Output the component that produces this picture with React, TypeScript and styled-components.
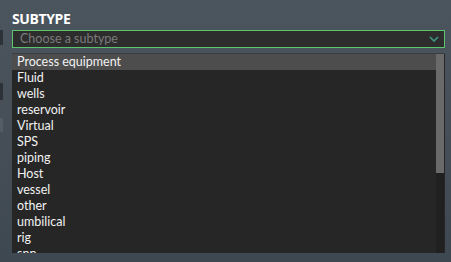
import { FC } from "react";
import styled, { createGlobalStyle } from "styled-components";

const OPTIONS = [
  "Process equipment",
  "Fluid",
  "wells",
  "reservoir",
  "Virtual",
  "SPS",
  "piping",
  "Host",
  "vessel",
  "other",
  "umbilical",
  "rig",
  "spp",
];

const GlobalStyle = createGlobalStyle`
  html, body {
    margin: 0;
    padding: 0;
    background: #434d56;
  }
  body {
    font-family: Lato, "Open Sans", sans-serif;
  }
`;

const Chevron: FC = () => (
  <svg width="10" height="6" viewBox="0 0 10 6" fill="none">
    <path d="M1 1 L5 5 L9 1" stroke="#3f9a84" strokeWidth="1.6" />
  </svg>
);

const App: FC = () => (
  <Page>
    <GlobalStyle />
    <Rail>
      <RailBlock $h={15} $mt={30} $tone="#2c3237" />
      <RailBlock $h={17} $mt={38} $tone="#2c3237" />
      <RailBlock $h={14} $mt={18} $tone="#525c65" />
    </Rail>
    <Content>
      <Title>SUBTYPE</Title>
      <SelectBox>
        <Placeholder>Choose a subtype</Placeholder>
        <Chevron />
      </SelectBox>
      <Dropdown>
        <List>
          {OPTIONS.map((opt, i) => (
            <Option key={opt} $active={i === 0}>
              {opt}
            </Option>
          ))}
        </List>
        <Scrollbar>
          <Thumb />
        </Scrollbar>
      </Dropdown>
    </Content>
  </Page>
);

export default App;

const Page = styled.div`
  display: flex;
  width: 451px;
  height: 262px;
  overflow: hidden;
  background: linear-gradient(180deg, #4b555e 0%, #464f58 50%, #3e4850 100%);
`;

const Rail = styled.div`
  display: flex;
  flex-direction: column;
  width: 3px;
  flex-shrink: 0;
`;

const RailBlock = styled.div<{ $h: number; $mt: number; $tone: string }>`
  height: ${(p) => p.$h}px;
  margin-top: ${(p) => p.$mt}px;
  background: ${(p) => p.$tone};
`;

const Content = styled.div`
  display: flex;
  flex-direction: column;
  flex: 1;
  padding: 9px 6px 0 9px;
`;

const Title = styled.div`
  font-family: "Open Sans", sans-serif;
  font-size: 14px;
  font-weight: 700;
  color: #ffffff;
  line-height: 19px;
  height: 19px;
  margin-bottom: 2px;
  letter-spacing: -0.4px;
`;

const SelectBox = styled.div`
  display: flex;
  align-items: center;
  justify-content: space-between;
  height: 18px;
  box-sizing: border-box;
  border: 1px solid #5ec56f;
  background: #2d2d2d;
  padding: 0 5px 0 7px;
`;

const Placeholder = styled.span`
  font-size: 12.5px;
  color: #7b7b7b;
  line-height: 16px;
`;

const Dropdown = styled.div`
  display: flex;
  margin-top: 5px;
  height: 200px;
  background: #262626;
  border-top: 1px solid #3a3d40;
  box-sizing: border-box;
  overflow: hidden;
`;

const List = styled.div`
  flex: 1;
  display: flex;
  flex-direction: column;
  overflow: hidden;
`;

const Option = styled.div<{ $active: boolean }>`
  flex-shrink: 0;
  height: 16px;
  line-height: 16px;
  padding-left: 5px;
  font-size: 12.5px;
  color: #f2f2f2;
  background: ${(p) => (p.$active ? "#4d4d4d" : "transparent")};
`;

const Scrollbar = styled.div`
  width: 8px;
  flex-shrink: 0;
  background: #202020;
  margin-right: 1px;
`;

const Thumb = styled.div`
  height: 119px;
  background: #6a6a6a;
`;
